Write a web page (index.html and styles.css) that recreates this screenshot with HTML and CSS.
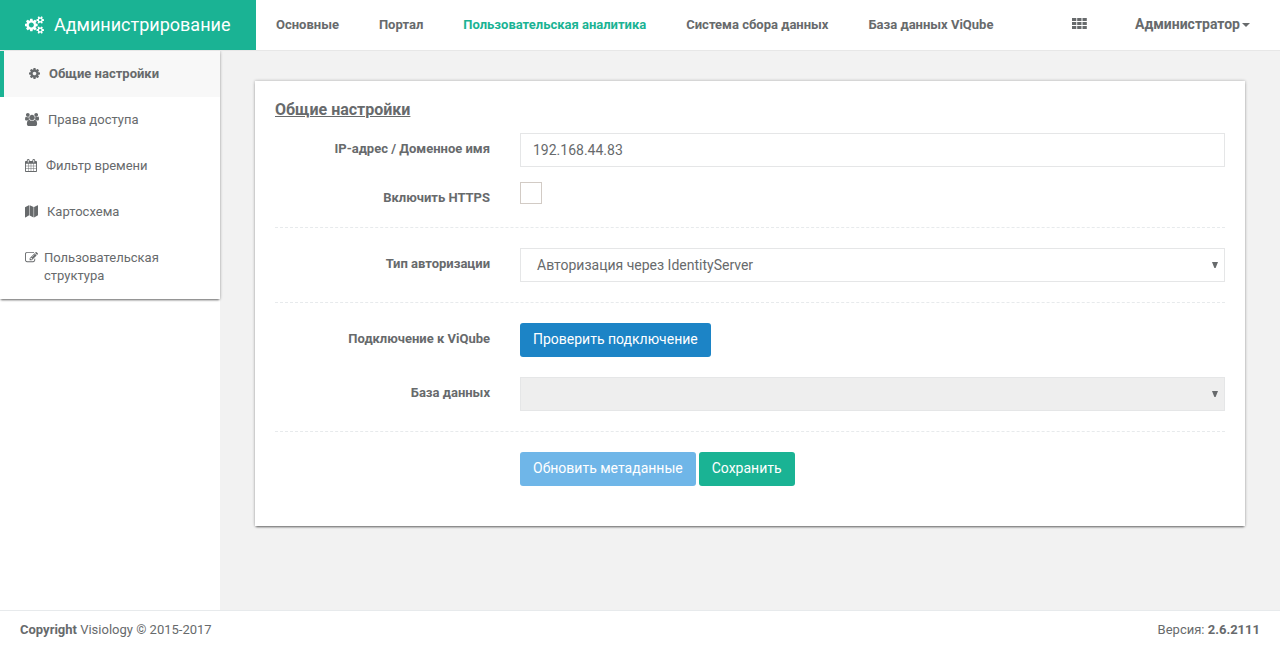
FILE: index.html
```
<!DOCTYPE html>
<html lang="ru">
<head>
<meta charset="utf-8">
<title>Администрирование</title>
<link rel="stylesheet" href="styles.css">
</head>
<body>
<header class="topbar">
  <a class="brand">
    <svg class="brand-icon" viewBox="-64 0 1920 1792"><path d="M832 896q0-106-75-181t-181-75-181 75-75 181 75 181 181 75 181-75 75-181zm768 512q0-52-38-90t-90-38-90 38-38 90q0 53 37.500 90.500t90.500 37.500 90.500-37.500 37.500-90.500zm0-1024q0-52-38-90t-90-38-90 38-38 90q0 53 37.500 90.500t90.500 37.500 90.500-37.500 37.500-90.500zm-384 421v185q0 10-7 19.500t-16 10.500l-155 24q-11 35-32 76 34 48 90 115 7 11 7 20 0 12-7 19-23 30-82.500 89.500t-78.500 59.500q-11 0-21-7l-115-90q-37 19-77 31-11 108-23 155-7 24-30 24h-186q-11 0-20-7.500t-10-17.500l-23-153q-34-10-75-31l-118 89q-7 7-20 7-11 0-21-8-144-133-144-160 0-9 7-19 10-14 41-53t47-61q-23-44-35-82l-152-24q-10-1-17-9.500t-7-19.500v-185q0-10 7-19.500t16-10.500l155-24q11-35 32-76-34-48-90-115-7-11-7-20 0-12 7-20 22-30 82-89t79-59q11 0 21 7l115 90q34-18 77-32 11-108 23-154 7-24 30-24h186q11 0 20 7.500t10 17.500l23 153q34 10 75 31l118-89q8-7 20-7 11 0 21 8 144 133 144 160 0 8-7 19-12 16-42 54t-45 60q23 48 34 82l152 23q10 2 17 10.500t7 19.500zm640 533v140q0 16-149 31-12 27-30 52 51 113 51 138 0 4-4 7-122 71-124 71-8 0-46-47t-52-68q-20 2-30 2t-30-2q-14 21-52 68t-46 47q-2 0-124-71-4-3-4-7 0-25 51-138-18-25-30-52-149-15-149-31v-140q0-16 149-31 13-29 30-52-51-113-51-138 0-4 4-7 4-2 35-20t59-34 30-16q8 0 46 46.500t52 67.500q20-2 30-2t30 2q51-71 92-112l6-2q4 0 124 70 4 3 4 7 0 25-51 138 17 23 30 52 149 15 149 31zm0-1024v140q0 16-149 31-12 27-30 52 51 113 51 138 0 4-4 7-122 71-124 71-8 0-46-47t-52-68q-20 2-30 2t-30-2q-14 21-52 68t-46 47q-2 0-124-71-4-3-4-7 0-25 51-138-18-25-30-52-149-15-149-31v-140q0-16 149-31 13-29 30-52-51-113-51-138 0-4 4-7 4-2 35-20t59-34 30-16q8 0 46 46.500t52 67.500q20-2 30-2t30 2q51-71 92-112l6-2q4 0 124 70 4 3 4 7 0 25-51 138 17 23 30 52 149 15 149 31z"/></svg>
    <span>Администрирование</span>
  </a>
  <nav class="topnav">
    <a>Основные</a>
    <a>Портал</a>
    <a class="current">Пользовательская аналитика</a>
    <a>Система сбора данных</a>
    <a>База данных ViQube</a>
  </nav>
  <div class="account">
    <svg class="apps-icon" viewBox="0 0 15 11"><path d="M0 0h4.300v3H0zM5.200 0h4.300v3H5.200zM10.500 0h4.300v3h-4.300zM0 4h4.300v3H0zM5.200 4h4.300v3H5.200zM10.500 4h4.300v3h-4.300zM0 8h4.300v3H0zM5.200 8h4.300v3H5.200zM10.500 8h4.300v3h-4.300z"/></svg>
    <a class="user">Администратор<span class="caret"></span></a>
  </div>
</header>
<div class="body">
  <aside class="sidebar">
    <ul class="menu">
      <li class="active">
        <svg class="i-cog" viewBox="128 128 1536 1536"><path d="M1152 896q0-106-75-181t-181-75-181 75-75 181 75 181 181 75 181-75 75-181zm512-109v222q0 12-8 23t-20 13l-185 28q-19 54-39 91 35 50 107 138 10 12 10 25t-9 23q-27 37-99 108t-94 71q-12 0-26-9l-138-108q-44 23-91 38-16 136-29 186-7 28-36 28h-222q-14 0-24.500-8.500t-11.500-21.500l-28-184q-49-16-90-37l-141 107q-10 9-25 9-14 0-25-11-126-114-165-168-7-10-7-23 0-12 8-23 15-21 51-66.500t54-70.500q-27-50-41-99l-183-27q-13-2-21-12.500t-8-23.500v-222q0-12 8-23t19-13l186-28q14-46 39-92-40-57-107-138-10-12-10-24 0-10 9-23 26-36 98.500-107.500t94.500-71.500q13 0 26 10l138 107q44-23 91-38 16-136 29-186 7-28 36-28h222q14 0 24.500 8.500t11.500 21.500l28 184q49 16 90 37l142-107q9-9 24-9 13 0 25 10 129 119 165 170 7 8 7 22 0 12-8 23-15 21-51 66.500t-54 70.500q26 50 41 98l183 28q13 2 21 12.500t8 23.500z"/></svg>
        <span>Общие настройки</span>
      </li>
      <li>
        <svg class="i-users" viewBox="-64 0 1920 1792"><path d="M529 896q-162 5-265 128h-134q-82 0-138-40.500t-56-118.500q0-353 124-353 6 0 43.500 21t97.500 42.500 119 21.500q67 0 133-23-5 37-5 66 0 159 93 287zm1071 637q0 120-73 189.500t-194 69.500h-874q-121 0-194-69.500t-73-189.500q0-53 3.500-103.500t14-109 26.500-108.500 43-97.500 62-81 85.500-53.500 111.500-20q10 0 43 21.500t73 48 107 48 135 21.500 135-21.500 107-48 73-48 43-21.500q61 0 111.500 20t85.500 53.500 62 81 43 97.500 26.500 108.500 14 109 3.500 103.500zm-1024-1277q0 106-75 181t-181 75-181-75-75-181 75-181 181-75 181 75 75 181zm704 384q0 159-112.500 271.500t-271.500 112.500-271.500-112.500-112.500-271.500 112.500-271.500 271.500-112.500 271.500 112.500 112.500 271.500zm576 225q0 78-56 118.500t-138 40.500h-134q-103-123-265-128 93-128 93-287 0-29-5-66 66 23 133 23 59 0 119-21.500t97.500-42.500 43.500-21q124 0 124 353zm-128-609q0 106-75 181t-181 75-181-75-75-181 75-181 181-75 181 75 75 181z"/></svg>
        <span>Права доступа</span>
      </li>
      <li>
        <svg class="i-calendar" viewBox="64 0 1664 1792"><path d="M192 1664h288v-288h-288v288zm352 0h320v-288h-320v288zm-352-352h288v-320h-288v320zm352 0h320v-320h-320v320zm-352-384h288v-288h-288v288zm736 736h320v-288h-320v288zm-384-736h320v-288h-320v288zm768 736h288v-288h-288v288zm-384-352h320v-320h-320v320zm-352-864v-288q0-13-9.500-22.500t-22.500-9.500h-64q-13 0-22.500 9.500t-9.500 22.500v288q0 13 9.500 22.500t22.500 9.500h64q13 0 22.500-9.500t9.500-22.500zm736 864h288v-320h-288v320zm-384-384h320v-288h-320v288zm384 0h288v-288h-288v288zm32-480v-288q0-13-9.500-22.500t-22.500-9.500h-64q-13 0-22.500 9.500t-9.500 22.500v288q0 13 9.500 22.500t22.500 9.500h64q13 0 22.500-9.500t9.500-22.500zm384-64v1280q0 52-38 90t-90 38h-1408q-52 0-90-38t-38-90v-1280q0-52 38-90t90-38h128v-96q0-66 47-113t113-47h64q66 0 113 47t47 113v96h384v-96q0-66 47-113t113-47h64q66 0 113 47t47 113v96h128q52 0 90 38t38 90z"/></svg>
        <span>Фильтр времени</span>
      </li>
      <li>
        <svg class="i-map" viewBox="0 0 13 13"><path d="M0 2.300 3.900.2q.3 0 .3.300v9.800L.4 12.500q-.4.100-.4-.3zM4.700.2l3.900 1.900v10.400L4.700 10.600zM9.100 2.100 12.600.2q.4-.1.400.3v9.800l-3.900 2.200z"/></svg>
        <span>Картосхема</span>
      </li>
      <li>
        <svg class="i-edit" viewBox="0 0 1792 1792"><path d="M888 1184l116-116-152-152-116 116v56h96v96h56zm440-720q-16-16-33 1l-350 350q-17 17-1 33t33-1l350-350q17-17 1-33zm80 594v190q0 119-84.500 203.500t-203.500 84.500h-832q-119 0-203.500-84.500t-84.500-203.500v-832q0-119 84.500-203.500t203.500-84.500h832q63 0 117 25 15 7 18 23 3 17-9 29l-49 49q-14 14-32 8-23-6-45-6h-832q-66 0-113 47t-47 113v832q0 66 47 113t113 47h832q66 0 113-47t47-113v-126q0-13 9-22l64-64q15-15 35-7t20 29zm-96-738l288 288-672 672h-288v-288zm444 132l-92 92-288-288 92-92q28-28 68-28t68 28l152 152q28 28 28 68t-28 68z"/></svg>
        <span>Пользовательская структура</span>
      </li>
    </ul>
  </aside>
  <main class="content">
    <section class="panel">
      <h1>Общие настройки</h1>
      <div class="row row-host"><label>IP-адрес / Доменное имя</label><div class="field">192.168.44.83</div></div>
      <div class="row row-https"><label>Включить HTTPS</label><div class="checkbox"></div></div>
      <hr>
      <div class="row"><label>Тип авторизации</label><div class="field select"><span>Авторизация через IdentityServer</span><svg class="arrow" viewBox="0 0 6 6"><path d="M0 0h6L3.600 6H2.400z"/></svg></div></div>
      <hr>
      <div class="row row-check"><label>Подключение к ViQube</label><div><button class="btn btn-blue">Проверить подключение</button></div></div>
      <div class="row"><label>База данных</label><div class="field select disabled"><span></span><svg class="arrow" viewBox="0 0 6 6"><path d="M0 0h6L3.600 6H2.400z"/></svg></div></div>
      <hr>
      <div class="row actions"><span></span><div class="buttons"><button class="btn btn-light">Обновить метаданные</button><button class="btn btn-green">Сохранить</button></div></div>
    </section>
  </main>
</div>
<footer class="footer">
  <div><b>Copyright</b> Visiology © 2015-2017</div>
  <div>Версия: <b>2.6.2111</b></div>
</footer>
</body>
</html>
```
FILE: styles.css
```
* { box-sizing: border-box; }
body {
  margin: 0;
  height: 649px;
  display: flex;
  flex-direction: column;
  overflow: hidden;
  font: 13px/18px Roboto, "Open Sans", sans-serif;
  color: #676a6c;
  background: #fff;
}
svg { fill: currentColor; display: block; flex: none; }
b { font-weight: 700; }

.topbar {
  height: 51px;
  flex: none;
  display: flex;
  border-bottom: 1px solid #e7e7e7;
  background: #fff;
}
.brand {
  width: 256px;
  height: 50px;
  padding-left: 25px;
  display: flex;
  align-items: center;
  gap: 10px;
  background: #1ab394;
  color: #fff;
  font-size: 18px;
}
.brand-icon { width: 19px; height: 18px; }
.topnav { display: flex; }
.topnav a { padding: 16px 20px; font-weight: 700; white-space: nowrap; }
.topnav .current { color: #1ab394; }
.account { margin-left: auto; display: flex; padding-right: 30px; }
.apps-icon { width: 15px; height: 11px; margin: 18px 48px 0 0; }
.user { padding-top: 15px; font-size: 14px; font-weight: 700; display: flex; }
.caret {
  width: 8px;
  height: 4px;
  margin: 8px 0 0 2px;
  border: 4px solid transparent;
  border-top-color: currentColor;
  border-bottom: 0;
}

.body { flex: 1; display: flex; min-height: 0; }
.sidebar { width: 220px; background: #fff; flex: none; z-index: 1; }
.menu {
  list-style: none;
  margin: 0;
  padding: 0;
  height: 248px;
  background: #fff;
  box-shadow: 0 2px 2px -1px rgba(0, 0, 0, .5), 0 0 3px rgba(0, 0, 0, .3);
  clip-path: inset(0 -5px -5px 0);
}
.menu li { display: flex; padding: 14px 20px 14px 25px; }
.menu .active {
  padding-left: 25px;
  border-left: 4px solid #1ab394;
  background: #f8f8f8;
  font-weight: 700;
}
.i-cog { width: 11px; height: 11px; margin: 3px 9px 0 0; }
.i-users { width: 14px; height: 13px; margin: 2px 9px 0 0; }
.i-calendar { width: 12px; height: 13px; margin: 2px 9px 0 0; }
.i-map { width: 13px; height: 13px; margin: 2px 9px 0 0; }
.i-edit { width: 13px; height: 13px; margin: 2px 6px 0 0; }

.content { flex: 1; background: #f2f2f2; padding: 30px 35px; }
.panel {
  height: 445px;
  padding: 19px 20px;
  background: #fff;
  box-shadow: 0 2px 2px -1px rgba(0, 0, 0, .5), 0 0 3px rgba(0, 0, 0, .3);
}
h1 {
  margin: 0 0 13px;
  font-size: 16px;
  line-height: 20px;
  font-weight: 700;
  text-decoration: underline;
}
.row { display: grid; grid-template-columns: 215px 705px; column-gap: 30px; min-height: 34px; }
.row label { text-align: right; padding-top: 7px; font-weight: 700; }
.row-host { margin-bottom: 15px; }
.row-check { margin-bottom: 20px; }
.row-https { height: 45px; }
.field {
  height: 34px;
  border: 1px solid #e5e6e7;
  padding: 7px 12px;
  font-size: 14px;
}
.select { display: flex; justify-content: space-between; padding: 7px 6px 7px 16px; }
.arrow { width: 6px; height: 6px; margin-top: 6px; }
.disabled { background: #eee; }
.checkbox { width: 22px; height: 22px; border: 1px solid #d2cbc5; }
hr { margin: 20px 0; border: 0; border-top: 1px dashed #e7eaec; }
.row-https + hr { margin-top: 0; }
.btn {
  height: 34px;
  padding: 0 13px 2px;
  border: 0;
  border-radius: 3px;
  color: #fff;
  font: 14px/20px Roboto, sans-serif;
}
.buttons { display: flex; gap: 3px; }
.btn-blue { background: #1c84c6; }
.btn-light { background: #6fb6e8; }
.btn-green { background: #1ab394; }

.footer {
  height: 39px;
  flex: none;
  display: flex;
  justify-content: space-between;
  padding: 10px 20px;
  border-top: 1px solid #e7eaec;
}
```
